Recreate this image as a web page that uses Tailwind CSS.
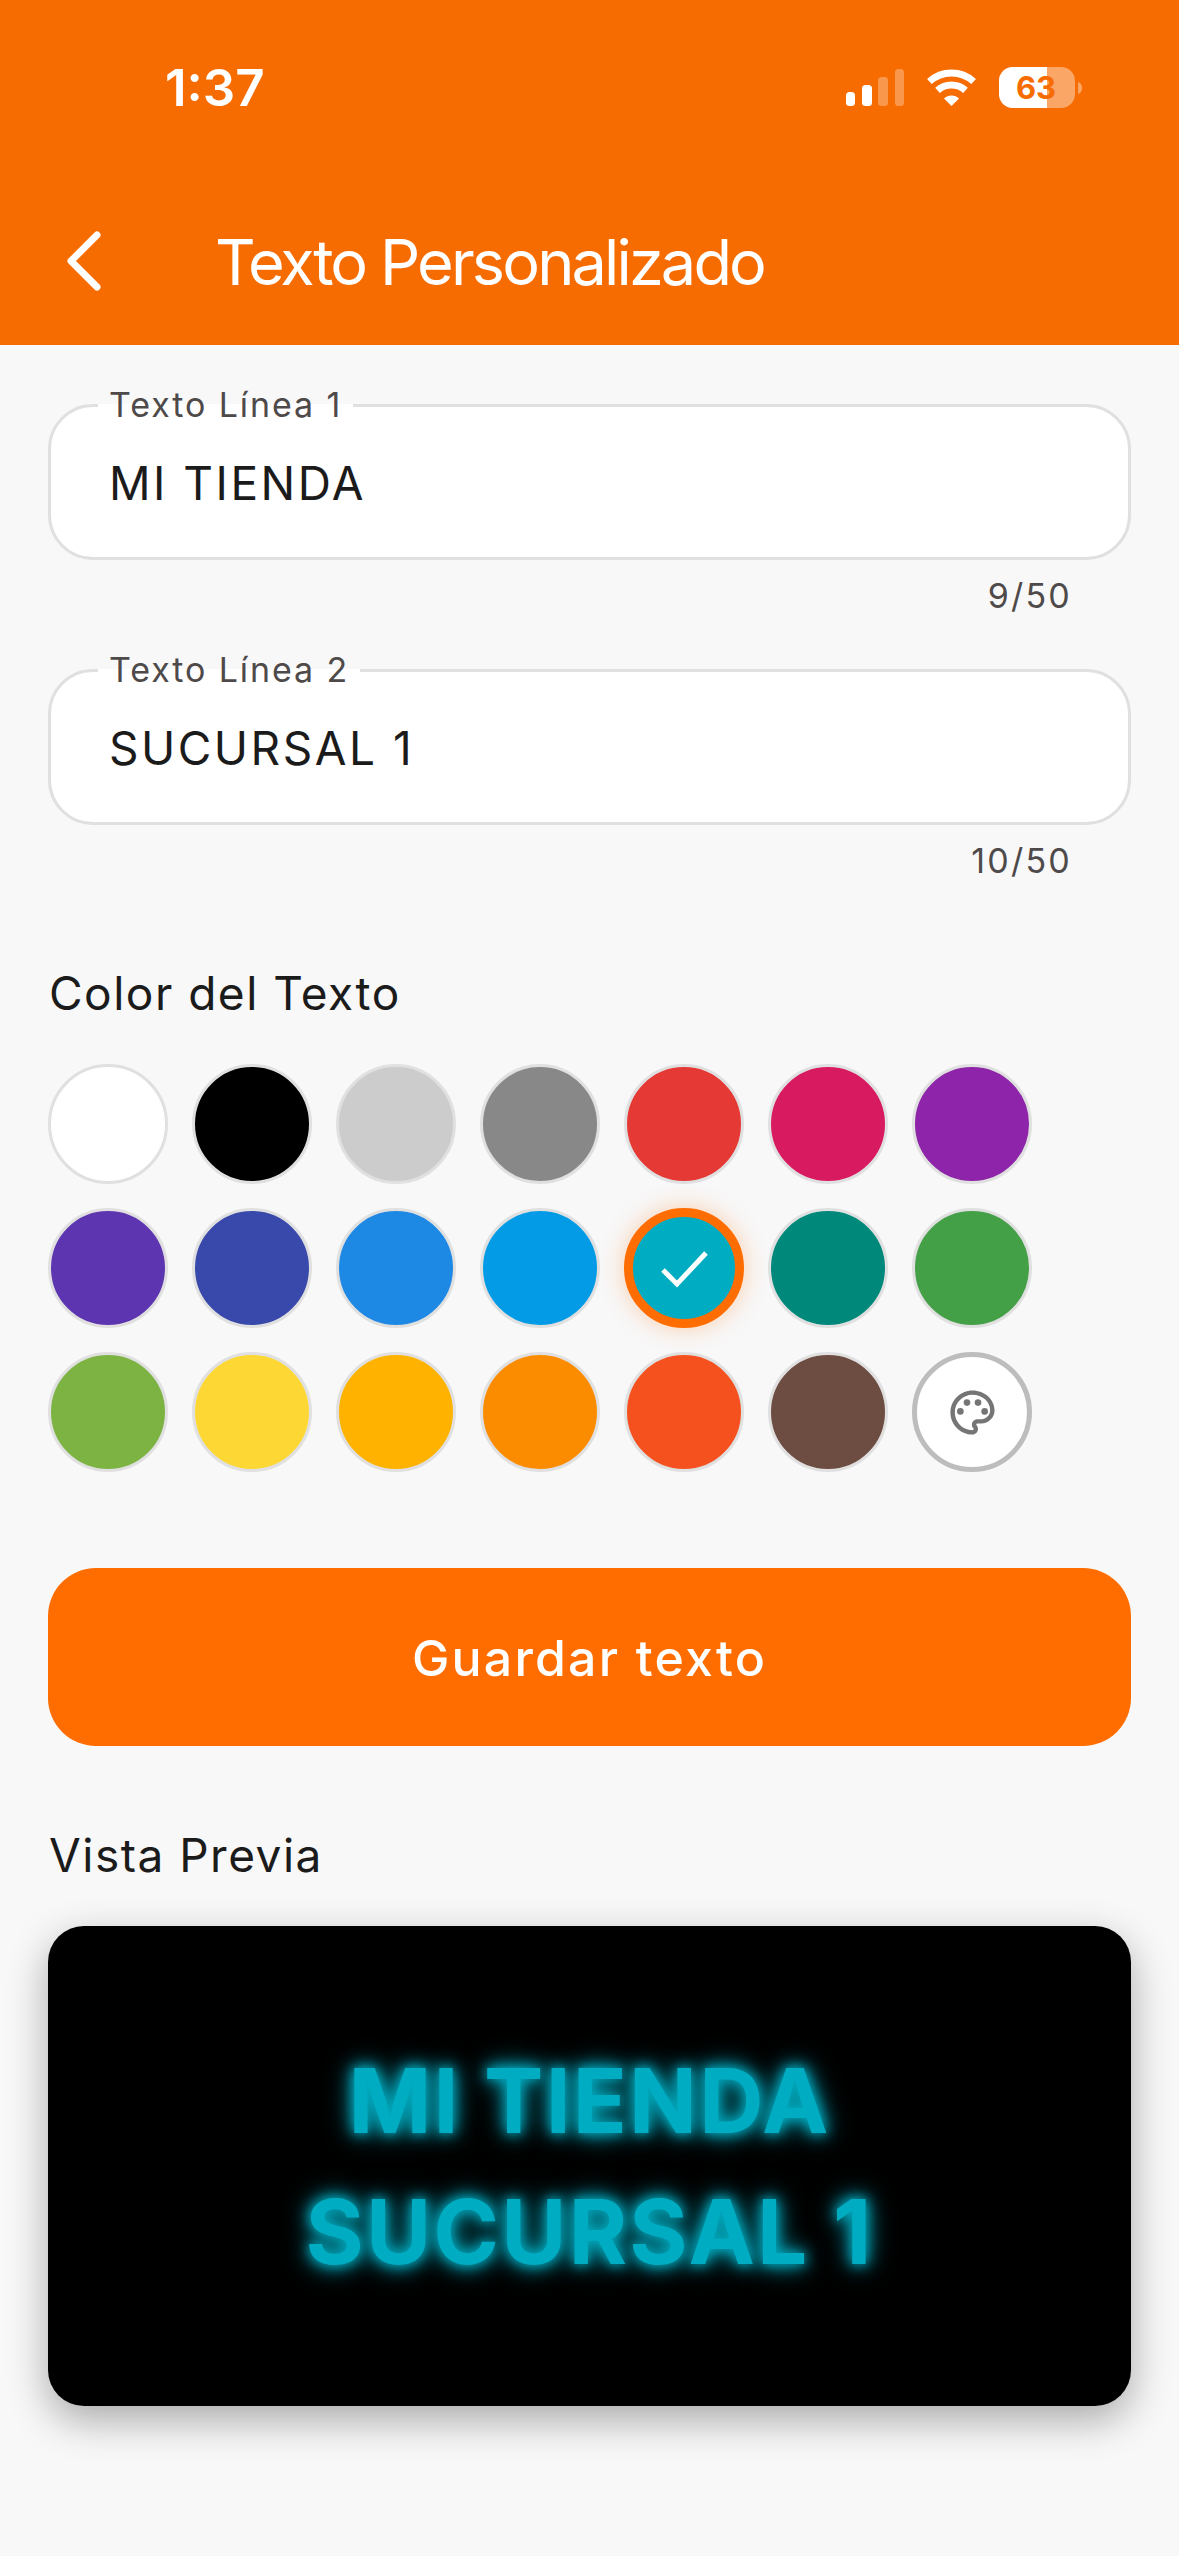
<!DOCTYPE html>
<html lang="es">
<head>
<meta charset="utf-8">
<script src="https://cdn.jsdelivr.net/npm/@tailwindcss/browser@4"></script>
<title>Texto Personalizado</title>
</head>
<body class="w-[1179px] h-[2556px] overflow-hidden bg-[#f8f8f8] [font-family:Inter,sans-serif]">
<header class="h-[345px] bg-[#f76c00] text-white pt-[60px]">
  <div class="flex items-center justify-between h-[55px] pl-[165px] pr-[97px]">
    <span class="text-[51px] leading-[55px] font-semibold tracking-[0px]">1:37</span>
    <div class="flex items-center">
      <svg class="w-[58px] h-[37px]" viewBox="0 0 58 37" fill="#fff">
        <rect x="0" y="23" width="9" height="14" rx="3.5"/>
        <rect x="16" y="16" width="10" height="21" rx="3.5"/>
        <rect x="32" y="8" width="10" height="29" rx="3.5" fill-opacity=".3"/>
        <rect x="49" y="0" width="9" height="37" rx="3.5" fill-opacity=".3"/>
      </svg>
      <svg class="ml-[23px] w-[49px] h-[37px]" viewBox="0 0 49 37" fill="none" stroke="#fff" stroke-width="7">
        <path d="M2.4 12.5A33 33 0 0 1 46.6 12.5"/>
        <path d="M10.5 21.4A21 21 0 0 1 38.5 21.4"/>
        <path d="M24.5 37L17 29.5A10.6 10.6 0 0 1 32 29.5Z" fill="#fff" stroke="none"/>
      </svg>
      <div class="relative ml-[23px] w-[76px] h-[41px] rounded-[14px] overflow-hidden bg-white/40 flex items-center justify-center">
        <div class="absolute left-0 top-0 w-[48px] h-full bg-white"></div>
        <span class="relative -ml-[2px] text-[31px] leading-none font-bold text-[#f76c00]">63</span>
      </div>
      <svg class="ml-[3px] w-[4px] h-[12px]" viewBox="0 0 4 12"><path d="M0 0C2.5 .5 4 3 4 6S2.5 11.5 0 12Z" fill="#fff" fill-opacity=".4"/></svg>
    </div>
  </div>
  <div class="flex items-center h-[90px] mt-[101px] pl-[64px]">
    <svg class="w-[40px] h-[64px] shrink-0" viewBox="0 0 40 64" fill="none" stroke="#fff" stroke-width="7" stroke-linecap="round" stroke-linejoin="round"><path d="M33 6L7 32L33 58" /></svg>
    <h1 class="ml-[111px] text-[63px] leading-[90px] font-normal tracking-[-2.85px] translate-y-[1px]">Texto Personalizado</h1>
  </div>
</header>
<main class="px-[48px] text-[#1c1b1b]">
  <fieldset class="mt-[42px] border-[3px] border-[#e0e0e0] rounded-[45px] bg-white">
    <legend class="ml-[47px] px-[11px] text-[34px] leading-[36px] tracking-[1.9px] text-[#4f4a4a]">Texto Línea 1</legend>
    <div class="h-[134px] pt-[36px] pl-[58px] text-[46px] leading-[48px] tracking-[2.5px]">MI TIENDA</div>
  </fieldset>
  <div class="mt-[18px] pr-[59px] text-right text-[34px] leading-[36px] tracking-[2.2px] text-[#4f4a4a]">9/50</div>
  <fieldset class="mt-[38px] border-[3px] border-[#e0e0e0] rounded-[45px] bg-white">
    <legend class="ml-[47px] px-[11px] text-[34px] leading-[36px] tracking-[1.9px] text-[#4f4a4a]">Texto Línea 2</legend>
    <div class="h-[134px] pt-[36px] pl-[58px] text-[46px] leading-[48px] tracking-[2.5px]">SUCURSAL 1</div>
  </fieldset>
  <div class="mt-[18px] pr-[59px] text-right text-[34px] leading-[36px] tracking-[2.2px] text-[#4f4a4a]">10/50</div>

  <h2 class="mt-[89px] h-[50px] pl-[1px] text-[46px] leading-[50px] font-[420] tracking-[1.5px]">Color del Texto</h2>
  <div class="mt-[46px] grid grid-cols-[repeat(7,120px)] gap-[24px]">
    <div class="h-[120px] rounded-full border-[3px] border-[#e0e0e0] bg-white"></div>
    <div class="h-[120px] rounded-full border-[3px] border-[#e0e0e0] bg-black"></div>
    <div class="h-[120px] rounded-full border-[3px] border-[#e0e0e0] bg-[#cccccc]"></div>
    <div class="h-[120px] rounded-full border-[3px] border-[#e0e0e0] bg-[#888888]"></div>
    <div class="h-[120px] rounded-full border-[3px] border-[#e0e0e0] bg-[#e53935]"></div>
    <div class="h-[120px] rounded-full border-[3px] border-[#e0e0e0] bg-[#d81b60]"></div>
    <div class="h-[120px] rounded-full border-[3px] border-[#e0e0e0] bg-[#8e24aa]"></div>

    <div class="h-[120px] rounded-full border-[3px] border-[#e0e0e0] bg-[#5e35b1]"></div>
    <div class="h-[120px] rounded-full border-[3px] border-[#e0e0e0] bg-[#3949ab]"></div>
    <div class="h-[120px] rounded-full border-[3px] border-[#e0e0e0] bg-[#1e88e5]"></div>
    <div class="h-[120px] rounded-full border-[3px] border-[#e0e0e0] bg-[#039be5]"></div>
    <div class="h-[120px] rounded-full border-[9px] border-[#ff6d00] bg-[#00acc1] shadow-[0_0_24px_rgba(255,109,0,0.3)] flex items-center justify-center">
      <svg class="w-[60px] h-[60px]" viewBox="0 0 60 60" fill="none" stroke="#fff" stroke-width="5"><path d="M9 32L23 46L52 15"/></svg>
    </div>
    <div class="h-[120px] rounded-full border-[3px] border-[#e0e0e0] bg-[#00897b]"></div>
    <div class="h-[120px] rounded-full border-[3px] border-[#e0e0e0] bg-[#43a047]"></div>

    <div class="h-[120px] rounded-full border-[3px] border-[#e0e0e0] bg-[#7cb342]"></div>
    <div class="h-[120px] rounded-full border-[3px] border-[#e0e0e0] bg-[#fdd835]"></div>
    <div class="h-[120px] rounded-full border-[3px] border-[#e0e0e0] bg-[#ffb300]"></div>
    <div class="h-[120px] rounded-full border-[3px] border-[#e0e0e0] bg-[#fb8c00]"></div>
    <div class="h-[120px] rounded-full border-[3px] border-[#e0e0e0] bg-[#f4511e]"></div>
    <div class="h-[120px] rounded-full border-[3px] border-[#e0e0e0] bg-[#6d4c41]"></div>
    <div class="h-[120px] rounded-full border-[5px] border-[#bdbdbd] bg-white flex items-center justify-center">
      <svg class="w-[53px] h-[53px]" viewBox="0 0 24 24" fill="#757575">
        <path d="M12 22C6.49 22 2 17.51 2 12S6.49 2 12 2s10 4.04 10 9c0 3.31-2.69 6-6 6h-1.77c-.28 0-.5.22-.5.5 0 .12.05.23.13.33.41.47.64 1.06.64 1.67 0 1.38-1.12 2.5-2.5 2.5zm0-18c-4.41 0-8 3.59-8 8s3.59 8 8 8c.28 0 .5-.22.5-.5 0-.16-.08-.28-.14-.35-.41-.46-.63-1.05-.63-1.65 0-1.38 1.12-2.5 2.5-2.5H16c2.21 0 4-1.79 4-4 0-3.86-3.59-7-8-7z"/>
        <circle cx="6.5" cy="11.5" r="1.5"/><circle cx="9.5" cy="7.5" r="1.5"/><circle cx="14.5" cy="7.5" r="1.5"/><circle cx="17.5" cy="11.5" r="1.5"/>
      </svg>
    </div>
  </div>

  <button class="mt-[96px] w-full h-[178px] pt-[2px] rounded-[48px] bg-[#ff6d00] text-white text-[50px] font-[550] tracking-[2.2px]">Guardar texto</button>

  <h2 class="mt-[84px] h-[50px] pl-[1px] text-[46px] leading-[50px] font-[420] tracking-[1.5px]">Vista Previa</h2>
  <div class="mt-[46px] h-[480px] rounded-[36px] bg-black shadow-[0_14px_40px_rgba(0,0,0,0.32)] flex flex-col items-center justify-center text-[89px] leading-[131px] font-bold tracking-[2.2px] text-[#00acc1] [text-shadow:0_0_12px_#00acc1,0_0_20px_#00acc1,0_0_30px_rgba(0,172,193,0.6)]">
    <div>MI TIENDA</div>
    <div>SUCURSAL 1</div>
  </div>
</main>
</body>
</html>
